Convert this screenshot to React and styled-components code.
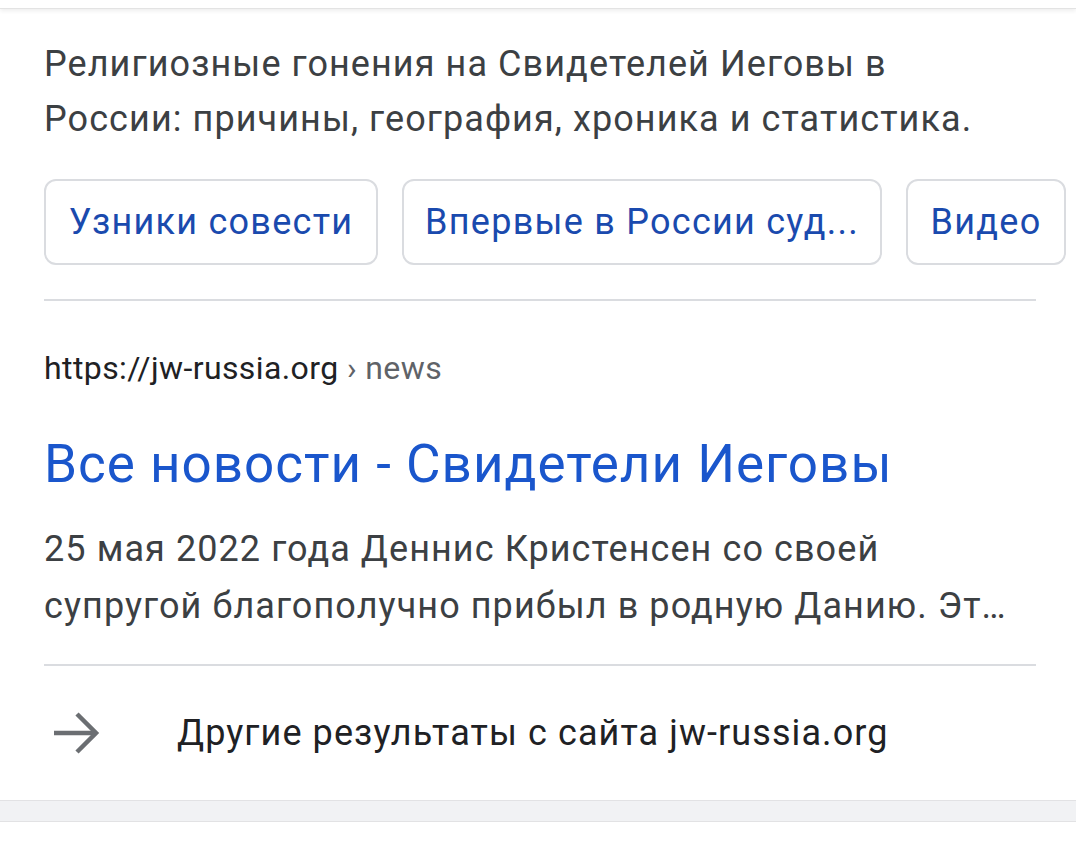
import React from "react";
import styled, { createGlobalStyle } from "styled-components";

const Global = createGlobalStyle`
  html, body { margin: 0; padding: 0; background: #fff; }
  body { font-family: Roboto, "Noto Sans", Arial, sans-serif; -webkit-font-smoothing: antialiased; }
  * { box-sizing: border-box; }
`;

const Page = styled.div`
  width: 1076px;
  min-height: 851px;
  background: #fff;
  overflow: hidden;
`;

const TopEdge = styled.div`
  height: 9px;
  background: #fff;
  border-bottom: 1px solid #e3e3e3;
  box-shadow: 0 2px 4px rgba(0, 0, 0, 0.07);
  position: relative;
  z-index: 1;
`;

const Card = styled.section`
  padding: 28px 40px 0 44px;
  display: flex;
  flex-direction: column;
`;

const Description = styled.p`
  margin: 0;
  max-width: 960px;
  font-size: 36px;
  letter-spacing: 0.03em;
  line-height: 55px;
  color: #3c4043;
`;

const Chips = styled.div`
  display: flex;
  gap: 24px;
  margin-top: 32px;
  margin-right: -40px;
  white-space: nowrap;
`;

const Chip = styled.a`
  display: flex;
  align-items: center;
  justify-content: center;
  height: 86px;
  width: ${(p) => p.$w}px;
  flex: none;
  border: 2px solid #dadce0;
  border-radius: 12px;
  color: #1a4aae;
  font-size: 36px;
  letter-spacing: 0.035em;
  text-decoration: none;
`;

const Divider = styled.hr`
  margin: ${(p) => p.$top}px 0 0 0;
  border: 0;
  height: 2px;
  background: #dadce0;
  width: 992px;
`;

const Url = styled.div`
  margin-top: 47px;
  font-size: 32px;
  letter-spacing: 0.4px;
  line-height: 40px;
  color: #202124;
`;

const Crumb = styled.span`
  color: #5f6368;
`;

const Title = styled.a`
  margin-top: 44px;
  font-size: 53px;
  letter-spacing: 1px;
  line-height: 64px;
  color: #1a56cc;
  text-decoration: none;
`;

const Snippet = styled.p`
  margin: 25px 0 0 0;
  font-size: 36px;
  letter-spacing: 0.03em;
  line-height: 57px;
  color: #3c4043;
  width: 992px;
`;

const MoreRow = styled.a`
  display: flex;
  align-items: center;
  height: 134px;
  color: #202124;
  font-size: 36px;
  letter-spacing: 0.03em;
  text-decoration: none;
`;

const ArrowBox = styled.span`
  width: 133px;
  flex: none;
  display: flex;
  align-items: center;
  padding-left: 8px;
  color: #6b6e72;
`;

const BottomBand = styled.div`
  height: 22px;
  background: #f1f2f4;
  border-top: 1px solid #e2e2e4;
  border-bottom: 1px solid #e2e2e4;
`;

export default function App() {
  return (
    <Page>
      <Global />
      <TopEdge />
      <Card>
        <Description>
          Религиозные гонения на Свидетелей Иеговы в России: причины, география, хроника и статистика.
        </Description>
        <Chips>
          <Chip $w={334}>Узники совести</Chip>
          <Chip $w={480}>Впервые в России суд...</Chip>
          <Chip $w={160}>Видео</Chip>
        </Chips>
        <Divider $top={34} />
        <Url>
          https://jw-russia.org <Crumb>› news</Crumb>
        </Url>
        <Title href="#">Все новости - Свидетели Иеговы</Title>
        <Snippet>
          25 мая 2022 года Деннис Кристенсен со своей супругой благополучно прибыл в родную Данию. Эт…
        </Snippet>
        <Divider $top={29} />
        <MoreRow href="#">
          <ArrowBox>
            <svg width="48" height="44" viewBox="0 0 48 44" fill="none" stroke="currentColor" strokeWidth="4.5" strokeLinecap="butt">
              <path d="M2 22 H44" />
              <path d="M25 3 L44 22 L25 41" />
            </svg>
          </ArrowBox>
          Другие результаты с сайта jw-russia.org
        </MoreRow>
      </Card>
      <BottomBand />
    </Page>
  );
}
